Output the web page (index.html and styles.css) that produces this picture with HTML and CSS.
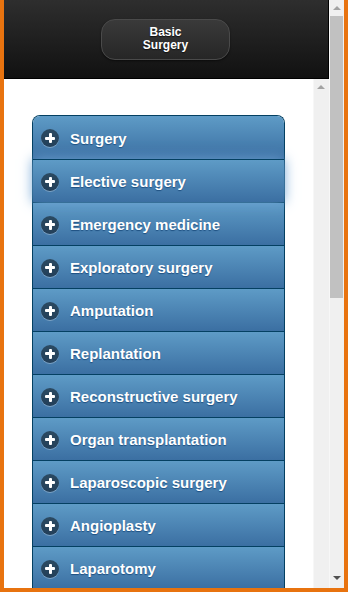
FILE: index.html
```html
<!DOCTYPE html>
<html lang="en">
<head>
    <meta charset="UTF-8">
    <meta name="viewport" content="width=device-width, initial-scale=1.0">
    <title>Basic Surgery</title>
    <link rel="stylesheet" href="styles.css">
</head>
<body>
    <div class="frame">
        <div class="viewport">
            <div class="header">
                <a class="header-btn" href="#">Basic<br>Surgery</a>
            </div>
            <div class="content">
                <div class="list-area">
                    <ul class="listview">
                        <li class="item"><span class="plus"></span>Surgery</li>
                        <li class="item focus"><span class="plus"></span>Elective surgery</li>
                        <li class="item"><span class="plus"></span>Emergency medicine</li>
                        <li class="item"><span class="plus"></span>Exploratory surgery</li>
                        <li class="item"><span class="plus"></span>Amputation</li>
                        <li class="item"><span class="plus"></span>Replantation</li>
                        <li class="item"><span class="plus"></span>Reconstructive surgery</li>
                        <li class="item"><span class="plus"></span>Organ transplantation</li>
                        <li class="item"><span class="plus"></span>Laparoscopic surgery</li>
                        <li class="item"><span class="plus"></span>Angioplasty</li>
                        <li class="item"><span class="plus"></span>Laparotomy</li>
                    </ul>
                </div>
                <!-- thanh cuộn bên trong -->
                <div class="scrollbar inner-scroll">
                    <span class="arrow-up"></span>
                </div>
            </div>
        </div>
        <!-- thanh cuộn ngoài -->
        <div class="scrollbar outer-scroll">
            <span class="arrow-up"></span>
            <div class="thumb"></div>
            <span class="arrow-down"></span>
        </div>
    </div>
</body>
</html>
```

FILE: styles.css
```css
html, body {
    margin: 0;
    padding: 0;
    height: 100%;
    overflow: hidden;
}

body {
    font-family: "Liberation Sans", Arial, sans-serif;
    background: #fff;
}

/* khung viền cam */
.frame {
    display: flex;
    height: 588px;
    border-left: 4px solid #e8730f;
    border-right: 4px solid #e8730f;
    border-bottom: 4px solid #e8730f;
    box-sizing: content-box;
}

.viewport {
    width: 325px;
    display: flex;
    flex-direction: column;
    overflow: hidden;
}

.header {
    height: 78px;
    flex-shrink: 0;
    display: flex;
    justify-content: center;
    align-items: center;
    background: linear-gradient(#2e2e2e, #111);
    border-right: 1px solid #000;
    border-bottom: 1px solid #000;
    box-sizing: content-box;
}

.header-btn {
    width: 127px;
    height: 39px;
    margin-right: 1px;
    display: flex;
    align-items: center;
    justify-content: center;
    text-align: center;
    color: #fff;
    font-weight: bold;
    font-size: 12px;
    line-height: 13px;
    text-decoration: none;
    text-shadow: 0 1px 1px #111;
    border: 1px solid #4a4a4a;
    border-radius: 14px;
    background: linear-gradient(#3a3a3a, #262626);
    box-shadow: 0 1px 2px rgba(0, 0, 0, 0.5);
}

.content {
    flex: 1;
    display: flex;
    overflow: hidden;
}

.list-area {
    width: 309px;
    padding: 36px 0 0 28px;
    box-sizing: border-box;
    overflow: hidden;
}

.listview {
    list-style: none;
    margin: 0;
    padding: 0;
    width: 251px;
    border: 1px solid #044062;
    border-bottom: none;
    border-radius: 8px 8px 0 0;
}

.item {
    position: relative;
    height: 42px;
    display: flex;
    align-items: center;
    padding-left: 8px;
    padding-top: 1px;
    box-sizing: border-box;
    height: 43px;
    border-top: 1px solid #044062;
    background: linear-gradient(#5e9bc6, #3b6fa2);
    color: #fff;
    font-weight: bold;
    font-size: 15px;
    text-shadow: 0 1px 1px #1d4f80;
}

.item:first-child {
    border-top: none;
    border-radius: 7px 7px 0 0;
}

.item.focus {
    z-index: 1;
    box-shadow: 0 0 12px #6fa3d4;
}

.plus {
    position: relative;
    width: 18px;
    height: 18px;
    margin-right: 11px;
    border-radius: 50%;
    background: rgba(0, 0, 0, 0.48);
    box-shadow: 0 1px 0 rgba(255, 255, 255, 0.3);
    flex-shrink: 0;
}

.plus::before, .plus::after {
    content: "";
    position: absolute;
    background: #fff;
    border-radius: 1px;
}

.plus::before {
    left: 4px;
    top: 7.5px;
    width: 10px;
    height: 3px;
}

.plus::after {
    left: 7.5px;
    top: 4px;
    width: 3px;
    height: 10px;
}

/* thanh cuộn giả */
.scrollbar {
    position: relative;
    width: 15px;
    flex-shrink: 0;
    background: #f0f0f0;
    border-left: 1px solid #f7f7f7;
    box-sizing: border-box;
}

.inner-scroll {
    width: 16px;
}

.arrow-up, .arrow-down {
    position: absolute;
    left: 3px;
    width: 0;
    height: 0;
    border-left: 4px solid transparent;
    border-right: 4px solid transparent;
}

.arrow-up {
    top: 6px;
    border-bottom: 4px solid #a3a3a3;
}

.arrow-down {
    bottom: 8px;
    border-top: 4px solid #505050;
}

.outer-scroll .thumb {
    margin: 16px 1px 0 0;
    height: 282px;
    background: #c1c1c1;
}
```
